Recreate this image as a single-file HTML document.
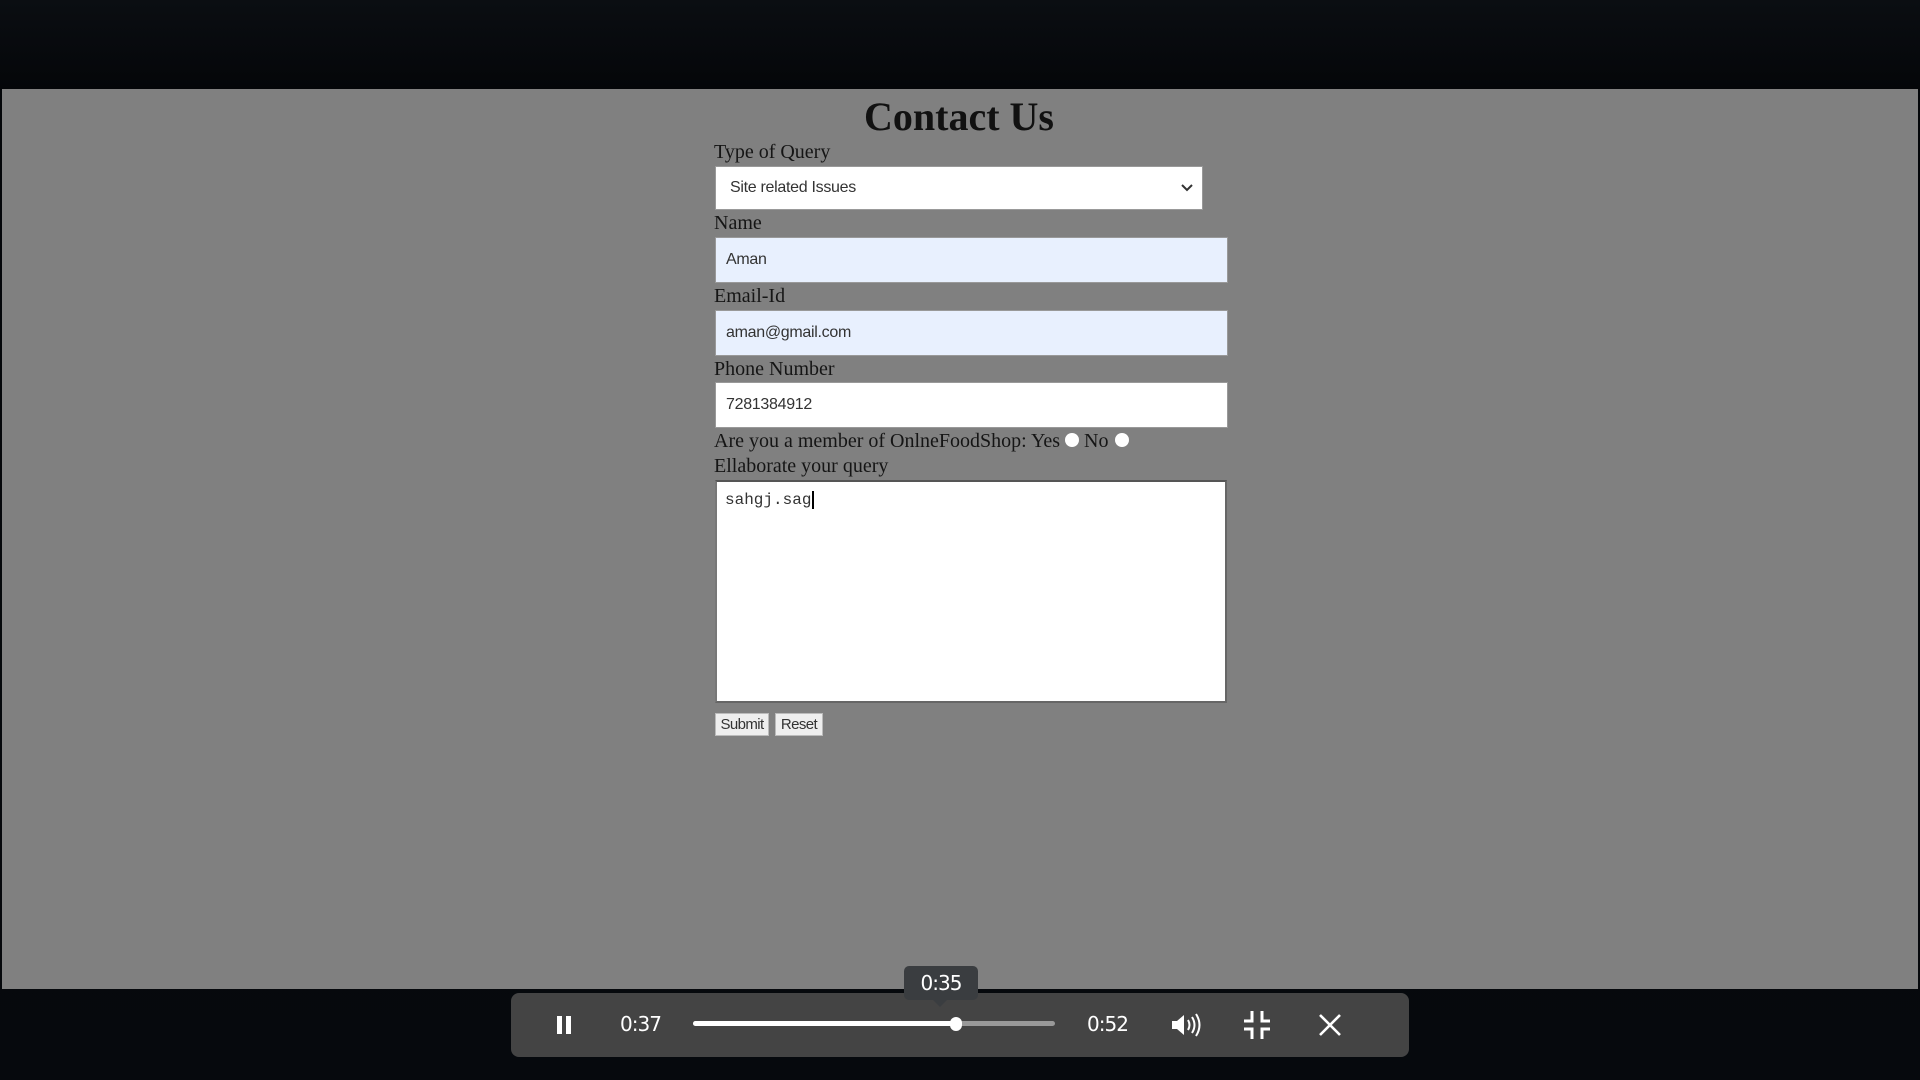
<!DOCTYPE html>
<html><head><meta charset="utf-8"><style>
*{margin:0;padding:0;box-sizing:border-box}
body{width:1920px;height:1080px;background:linear-gradient(#0b0e12,#040609 89px,#06090d);position:relative;overflow:hidden;font-family:"Liberation Serif",serif;color:#111}
.gray{position:absolute;left:2px;top:89px;width:1916px;height:900px;background:#808080}
.a{position:absolute}
.lbl{position:absolute;left:714px;font-size:20px;color:#151515;line-height:1}
.inp{position:absolute;left:715px;width:513px;height:46px;border:1px solid #999;font-family:"Liberation Sans",sans-serif;font-size:16px;letter-spacing:-0.3px;color:#333;padding-left:10px;line-height:44px}
.btn{position:absolute;top:713px;height:23px;background:#eee;border:1px solid #bbb;font-family:"Liberation Sans",sans-serif;font-size:15px;color:#333;text-align:center;line-height:21px;letter-spacing:-0.6px}
.radio{position:absolute;width:14px;height:14px;border-radius:50%;background:#fff;top:433px}
.bar{position:absolute;left:511px;top:993px;width:898px;height:64px;background:#444;border-radius:8px}
.t{position:absolute;color:#fff;font-family:"DejaVu Sans",sans-serif;font-size:20px;letter-spacing:-1px}
</style></head><body>
<div class="gray"></div>
<div class="a" style="left:0;top:93px;width:1918px;text-align:center;font-size:40px;font-weight:bold;color:#111">Contact Us</div>
<div class="lbl" style="top:142px">Type of Query</div>
<div class="inp" style="top:166px;width:488px;height:44px;background:#fff;line-height:42px;padding-left:14px">Site related Issues
<svg class="a" style="right:8px;top:15px" width="14" height="12" viewBox="0 0 14 12"><path d="M2 3l5 5 5-5" stroke="#333" stroke-width="2" fill="none"/></svg></div>
<div class="lbl" style="top:213px">Name</div>
<div class="inp" style="top:237px;background:#e8f0fe">Aman</div>
<div class="lbl" style="top:286px">Email-Id</div>
<div class="inp" style="top:310px;background:#e8f0fe">aman@gmail.com</div>
<div class="lbl" style="top:359px">Phone Number</div>
<div class="inp" style="top:382px;background:#fff">7281384912</div>
<div class="lbl" style="top:431px">Are you a member of OnlneFoodShop: Yes</div>
<div class="radio" style="left:1065px"></div>
<div class="lbl" style="left:1084px;top:431px">No</div>
<div class="radio" style="left:1115px"></div>
<div class="lbl" style="top:456px">Ellaborate your query</div>
<div class="a" style="left:715px;top:480px;width:512px;height:223px;background:#fff;border:2px solid #666;border-top-color:#555;border-left-color:#777"></div>
<div class="a" style="left:725px;top:491px;font-family:'Liberation Mono',monospace;font-size:16px;color:#333">sahgj.sag<span style="border-left:2px solid #000;margin-left:1px"></span></div>
<div class="btn" style="left:715px;width:54px">Submit</div>
<div class="btn" style="left:775px;width:48px">Reset</div>

<div class="bar"></div>
<div class="a" style="left:904px;top:966px;width:74px;height:34px;background:#3a3d40;border-radius:5px"></div>
<div class="a" style="left:933px;top:1000px;width:0;height:0;border-left:7px solid transparent;border-right:7px solid transparent;border-top:7px solid #3a3d40"></div>
<div class="t" style="left:904px;top:971px;width:74px;text-align:center">0:35</div>
<div class="a" style="left:557px;top:1016px;width:5px;height:18px;background:#fff"></div>
<div class="a" style="left:566px;top:1016px;width:5px;height:18px;background:#fff"></div>
<div class="t" style="left:620px;top:1012px">0:37</div>
<div class="a" style="left:693px;top:1021px;width:362px;height:5px;background:#999;border-radius:3px"></div>
<div class="a" style="left:693px;top:1021px;width:263px;height:5px;background:#fff;border-radius:3px"></div>
<div class="a" style="left:950px;top:1017px;width:12px;height:14px;background:#fff;border-radius:6px"></div>
<div class="t" style="left:1087px;top:1012px">0:52</div>
<svg class="a" style="left:1170px;top:1011px" width="36" height="28" viewBox="0 0 36 28"><path d="M2 10h5l7-6v20l-7-6H2z" fill="#fff"/><path d="M18 9q3 5 0 10M22 6q5 8 0 16M26 3q7 11 0 22" stroke="#fff" stroke-width="2" fill="none"/></svg>
<svg class="a" style="left:1243px;top:1010px" width="28" height="30" viewBox="0 0 28 30"><path d="M9 1v10H1M19 1v10h8M9 29V19H1M19 29V19h8" stroke="#fff" stroke-width="3" fill="none"/></svg>
<svg class="a" style="left:1318px;top:1013px" width="24" height="24" viewBox="0 0 24 24"><path d="M2 2l20 20M22 2L2 22" stroke="#fff" stroke-width="2.6"/></svg>
</body></html>
